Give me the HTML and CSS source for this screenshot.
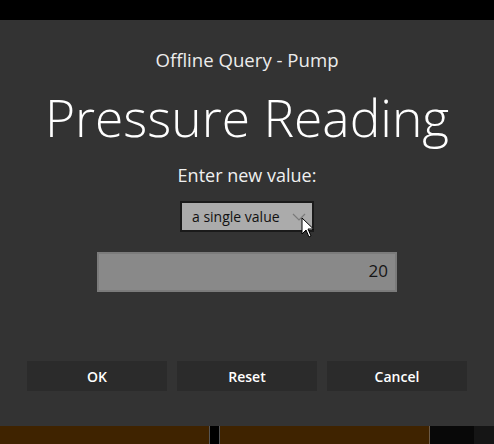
FILE: index.html
```html
<!DOCTYPE html>
<html>
<head>
<meta charset="utf-8">
<link rel="stylesheet" href="styles.css">
</head>
<body>
<div class="topstrip"></div>
<div class="dialog">
  <div class="subtitle">Offline Query - Pump</div>
  <div class="title">Pressure Reading</div>
  <div class="prompt">Enter new value:</div>
  <div class="select-row">
    <div class="select">
      <span>a single value</span>
      <svg class="chev" width="14" height="8" viewBox="0 0 14 8"><path d="M1 1 L7 7 L13 1" fill="none" stroke="#7a7a7a" stroke-width="1.2"/></svg>
      <svg class="cursor" width="14" height="22" viewBox="0 0 14 22"><path d="M1 1 L1 17 L5 13 L8 20 L10 19 L7 12 L12.5 12 Z" fill="#fff" stroke="#000" stroke-width="1"/></svg>
    </div>
  </div>
  <div class="input-row">
    <div class="input">20</div>
  </div>
  <div class="buttons">
    <div class="btn">OK</div>
    <div class="btn">Reset</div>
    <div class="btn">Cancel</div>
  </div>
</div>
<div class="bottomstrip">
  <div class="tile brown w1"></div>
  <div class="tile gap"></div>
  <div class="tile brown w2"></div>
  <div class="tile dark1"></div>
  <div class="tile dark2"></div>
</div>
</body>
</html>
```
FILE: styles.css
```css
html, body {
  margin: 0;
  padding: 0;
  background: #000;
  width: 494px;
  height: 444px;
  overflow: hidden;
  font-family: "Open Sans", "Noto Sans", sans-serif;
}
.topstrip {
  height: 20px;
  background: #000;
}
.dialog {
  height: 406px;
  background: #333333;
  display: flex;
  flex-direction: column;
  align-items: center;
  box-sizing: border-box;
  padding-top: 27px;
}
.subtitle {
  color: #ececec;
  font-size: 18.6px;
  line-height: 26px;
}
.title {
  color: #ffffff;
  font-size: 51.5px;
  font-weight: 300;
  line-height: 60px;
  margin-top: 14px;
}
.prompt {
  color: #f0f0f0;
  font-size: 18px;
  line-height: 24px;
  margin-top: 16px;
}
.select-row {
  margin-top: 14px;
}
.select {
  position: relative;
  width: 134px;
  height: 31px;
  box-sizing: border-box;
  border: 2px solid #1a1a1a;
  background: #ababab;
  display: flex;
  align-items: center;
  padding-left: 10px;
  gap: 12px;
  font-size: 14px;
  color: #111;
}
.chev {
  margin-top: 1px;
}
.cursor {
  position: absolute;
  left: 119px;
  top: 14px;
}
.input-row {
  margin-top: 20px;
}
.input {
  width: 300px;
  height: 40px;
  box-sizing: border-box;
  background: #898989;
  border: 2px solid #7b7b7b;
  text-align: right;
  padding-right: 7px;
  font-size: 17px;
  line-height: 34px;
  color: #151515;
}
.buttons {
  margin-top: 69px;
  display: flex;
  gap: 10px;
}
.btn {
  width: 140px;
  height: 30px;
  background: #2b2b2b;
  color: #fff;
  font-size: 14px;
  font-weight: 600;
  display: flex;
  align-items: center;
  justify-content: center;
}
.bottomstrip {
  height: 18px;
  display: flex;
}
.tile { height: 100%; }
.brown { background: #3f2300; }
.w1 { width: 209px; }
.gap { width: 9px; background: #000; border-left: 1px solid #555; border-right: 1px solid #555; }
.w2 { width: 209px; border-right: 1px solid #6a5a48; }
.dark1 { width: 44px; background: #080808; }
.dark2 { flex: 1; background: #151515; }
```
